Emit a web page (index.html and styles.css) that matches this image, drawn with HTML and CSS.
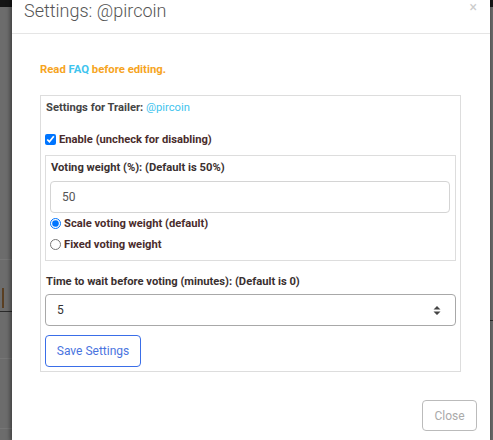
FILE: index.html
```
<!DOCTYPE html>
<html>
<head>
<meta charset="utf-8">
<link rel="stylesheet" href="styles.css">
</head>
<body>
<div class="modal">
  <div class="modal-header">
    <h4 class="title">Settings: @pircoin</h4>
    <span class="close-x">×</span>
  </div>
  <div class="modal-body">
    <p class="notice">Read <a class="link">FAQ</a> before editing.</p>
    <div class="box outer">
      <div class="heading">Settings for Trailer: <span class="link normal">@pircoin</span></div>
      <label class="check-row"><input type="checkbox" checked> <span>Enable (uncheck for disabling)</span></label>
      <div class="box inner">
        <div class="label">Voting weight (%): (Default is 50%)</div>
        <div class="field"><input class="field-input" type="text" value="50"></div>
        <label class="radio-row first"><input type="radio" name="w" checked> <span>Scale voting weight (default)</span></label>
        <label class="radio-row"><input type="radio" name="w"> <span>Fixed voting weight</span></label>
      </div>
      <div class="label time">Time to wait before voting (minutes): (Default is 0)</div>
      <div class="field field-num">
        <input class="field-input" type="text" value="5">
        <svg class="spin" width="8" height="11" viewBox="0 0 8 11"><path d="M4 1 L7.5 4.5 H0.5 Z M4 10 L7.5 6.5 H0.5 Z" fill="#444"/></svg>
      </div>
      <button class="btn-save">Save Settings</button>
    </div>
  </div>
  <div class="modal-footer">
    <button class="btn-close">Close</button>
  </div>
</div>
</body>
</html>
```
FILE: styles.css
```
html, body {
  margin: 0;
  padding: 0;
}
body {
  width: 493px;
  height: 440px;
  overflow: hidden;
  font-family: Roboto, "Liberation Sans", sans-serif;
  background:
    linear-gradient(#151515, #151515) 0 0 / 100% 7px no-repeat,
    linear-gradient(#767676, #767676) 0 259px / 12px 1px no-repeat,
    linear-gradient(#2a2a2a, #2a2a2a) 0 311px / 12px 1px no-repeat,
    linear-gradient(#5a3f22, #5a3f22) 2px 288px / 2px 20px no-repeat,
    linear-gradient(#767676, #767676) 0 358px / 12px 1px no-repeat,
    linear-gradient(#767676, #767676) 0 428px / 12px 1px no-repeat,
    linear-gradient(#2a2a2a, #2a2a2a) 490px 320px / 3px 1px no-repeat,
    #6c6c6c;
}
.modal {
  margin-left: 12px;
  width: 478px;
  height: 440px;
  background: #fff;
  box-shadow: -1px 0 4px 1px rgba(0,0,0,0.4);
  position: relative;
}
.modal-header {
  height: 33px;
  border-bottom: 1px solid #e5e5e5;
  display: flex;
  align-items: flex-start;
  justify-content: space-between;
}
.title {
  margin: 0;
  padding-left: 12px;
  font-size: 18px;
  font-weight: 300;
  line-height: 22px;
  color: #555;
}
.close-x {
  font-size: 14px;
  line-height: 14px;
  color: #ccc;
  margin-right: 13px;
}
.modal-body {
  padding: 28px 29px 0 28px;
}
.notice {
  margin: 0 0 17px 0;
  font-size: 11.3px;
  font-weight: 700;
  line-height: 16px;
  color: #f6a41e;
}
.link {
  color: #3fc4ee;
}
.normal {
  font-weight: 400;
}
.box {
  border: 1px solid #ddd;
}
.outer {
  padding: 4px 4px 4px 4px;
}
.heading {
  font-size: 11.2px;
  font-weight: 700;
  line-height: 16px;
  color: #444;
  padding-left: 1px;
}
.check-row {
  display: flex;
  align-items: center;
  margin-top: 15px;
  height: 16px;
  font-size: 11.2px;
  font-weight: 700;
  color: #4a2c2c;
}
.check-row input {
  margin: 0 3px 0 0;
  width: 11px;
  height: 11px;
}
.inner {
  margin-top: 8px;
  padding: 4px 5px 8px 4px;
}
.label {
  font-size: 11.2px;
  font-weight: 700;
  line-height: 16px;
  color: #3a3030;
  padding-left: 1px;
}
.field {
  margin-top: 5px;
  height: 30px;
  border: 1px solid #d4d4d4;
  border-radius: 4px;
  display: flex;
  align-items: center;
  padding: 0 11px;
}
.field-input {
  border: 0;
  outline: none;
  padding: 0;
  margin: 0;
  flex: 1;
  min-width: 0;
  font-family: Roboto, "Liberation Sans", sans-serif;
  font-size: 12px;
  color: #555;
  background: transparent;
}
.radio-row {
  display: flex;
  align-items: center;
  height: 16px;
  font-size: 11.2px;
  font-weight: 700;
  color: #4a2c2c;
  margin-top: 5px;
}
.radio-row.first {
  margin-top: 2px;
}
.radio-row input {
  margin: 0 3px 0 0;
  width: 11px;
  height: 11px;
}
.time {
  margin-top: 13px;
}
.field-num {
  margin-top: 4px;
  border-color: #a8a8a8;
  padding-right: 14px;
}
.field-num .field-input {
  color: #333;
}
.spin {
  display: block;
}
.btn-save {
  margin-top: 9px;
  width: 96px;
  height: 32px;
  border: 1px solid #3a6ee8;
  border-radius: 4px;
  background: #fff;
  color: #4a74e0;
  font-family: Roboto, "Liberation Sans", sans-serif;
  font-size: 12px;
  padding: 0;
  display: block;
}
.modal-footer {
  display: flex;
  justify-content: flex-end;
  padding: 28px 13px 0 0;
}
.btn-close {
  width: 55px;
  height: 31px;
  border: 1px solid #bbb;
  border-radius: 4px;
  background: #fff;
  color: #aaa;
  font-family: Roboto, "Liberation Sans", sans-serif;
  font-size: 12px;
  padding: 0;
}
```
